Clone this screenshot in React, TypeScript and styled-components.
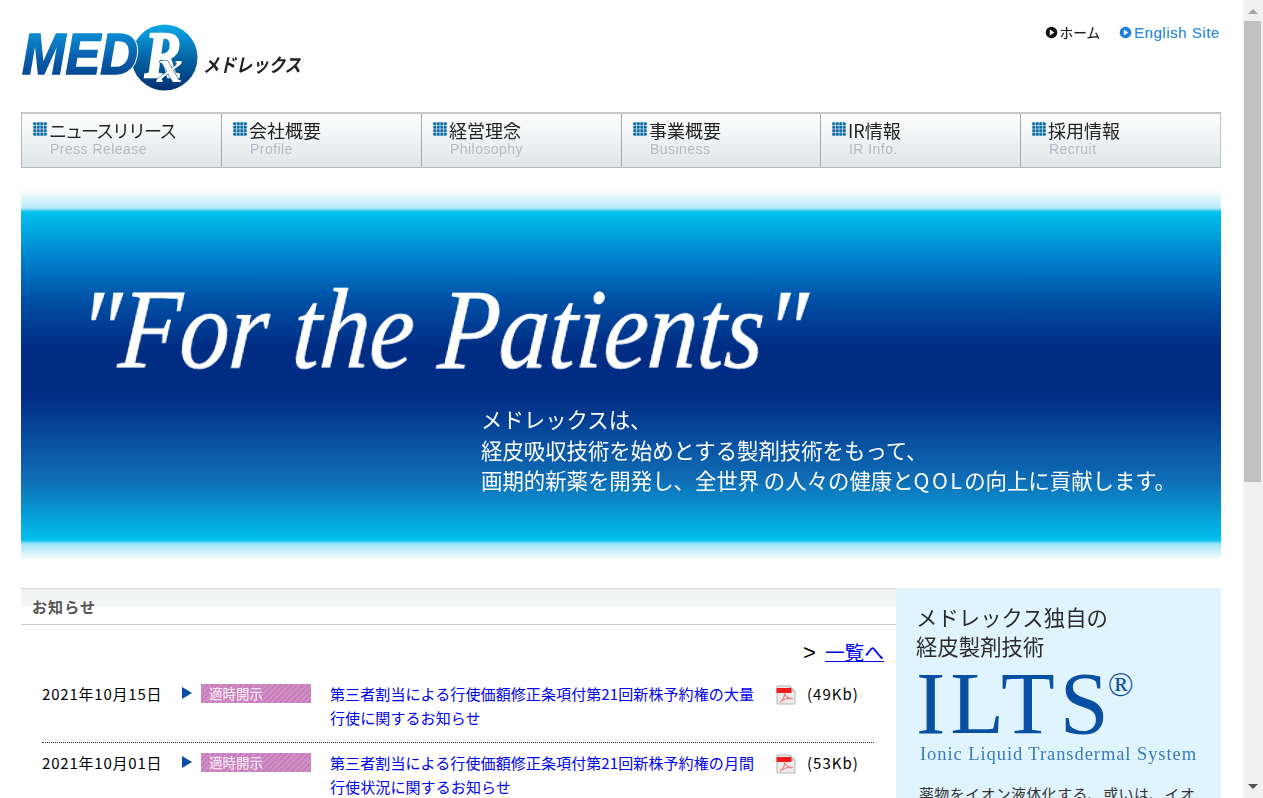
import React from "react";
import styled, { createGlobalStyle } from "styled-components";

const JP = `"Noto Sans CJK JP", "Noto Sans", sans-serif`;

const Global = createGlobalStyle`
  html { background: #fff; }
  body { margin: 0; font-family: ${JP}; color: #000; background: #fff; }
  a { color: #0000ee; }
`;

const Page = styled.div`
  width: 1200px;
  margin-left: 21px;
  min-height: 1308px;
`;

const ScrollTrack = styled.div`
  position: fixed;
  top: 0;
  right: 0;
  bottom: 0;
  width: 20px;
  background: #f1f1f1;
  display: flex;
  flex-direction: column;
`;

const ScrollButton = styled.div<{ $down?: boolean }>`
  height: 21px;
  flex: none;
  display: flex;
  justify-content: center;
  align-items: ${(p) => (p.$down ? "flex-start" : "flex-end")};
  padding: ${(p) => (p.$down ? "7px 1px 0 0" : "0 1px 7px 0")};
  box-sizing: border-box;
  &::before {
    content: "";
    width: 0;
    height: 0;
    border-left: 5px solid transparent;
    border-right: 5px solid transparent;
    ${(p) => (p.$down ? "border-top: 5px solid #505050;" : "border-bottom: 5px solid #a3a3a3;")}
  }
`;

const ScrollThumb = styled.div`
  height: 461px;
  margin: 0 2px 0 1px;
  background: #c1c1c1;
`;

const ScrollGap = styled.div`
  flex: 1;
`;

const Header = styled.header`
  height: 112px;
  display: flex;
  justify-content: space-between;
  align-items: flex-start;
`;

const LogoSvg = styled.svg`
  display: block;
  margin-top: 20px;
  filter: blur(0.35px);
`;

const MedText = styled.text`
  filter: drop-shadow(1.5px 0 0 #fff);
`;

const TopLinks = styled.nav`
  display: flex;
  gap: 19px;
  margin-top: 23px;
  margin-right: 1px;
  filter: blur(0.25px);
`;

const TopLink = styled.span<{ $color: string; $size: number; $spacing: number }>`
  display: flex;
  align-items: center;
  gap: 2px;
  height: 18px;
  color: ${(p) => p.$color};
  font-size: ${(p) => p.$size}px;
  letter-spacing: ${(p) => p.$spacing}px;
  font-family: "Liberation Sans", ${JP};
  -webkit-text-stroke: 0.2px ${(p) => p.$color};
  white-space: nowrap;
`;

const NavBar = styled.nav`
  display: grid;
  grid-template-columns: 199px 200px 200px 199px 200px 200px;
  height: 56px;
  box-sizing: border-box;
  border: 1px solid #b4b8b8;
  border-top: 2px solid #c6c9c9;
  border-right-color: #c0c4c4;
`;

const NavCell = styled.div`
  box-sizing: border-box;
  padding: 4px 0 0 11px;
  background: linear-gradient(#fefefe 0%, #f3f5f6 35%, #dfe6e8 100%);
  border-left: 1px solid #a4a9a9;
  &:first-child { border-left: 0; }
`;

const NavTitle = styled.div<{ $tight: boolean }>`
  display: flex;
  align-items: center;
  gap: 1px;
  height: 23px;
  font-size: 18px;
  line-height: 22px;
  letter-spacing: ${(p) => (p.$tight ? "-2px" : "0")};
  color: #222;
  white-space: nowrap;
  filter: blur(0.3px);
`;

const NavSub = styled.div`
  margin: 0 0 0 17px;
  height: 18px;
  font: 14px/17px "Liberation Sans", sans-serif;
  letter-spacing: 0.45px;
  color: #b3bcc5;
  filter: blur(0.25px);
`;

const Banner = styled.section`
  margin-top: 22px;
  height: 370px;
  box-sizing: border-box;
  padding-top: 82px;
  overflow: hidden;
  color: #fff;
  background: linear-gradient(
    #ffffff 0,
    #b8eafa 18px,
    #00c0ee 22px,
    #0080cc 70px,
    #0050a5 110px,
    #002c84 158px,
    #002c84 205px,
    #0f6db6 290px,
    #00c0ee 350px,
    #9fe4f8 354px,
    #ffffff 370px
  );
`;

const Slogan = styled.h1`
  margin: 0 0 0 53px;
  width: 840px;
  font: italic 400 114px/115px "Liberation Serif", serif;
  -webkit-text-stroke: 0.7px #fff;
  white-space: nowrap;
  transform: scaleX(0.87) skewX(-5deg);
  transform-origin: left bottom;
  filter: blur(0.3px);
`;

const Mission = styled.p`
  margin: 17px 0 0 460px;
  font-size: 21.4px;
  line-height: 30.5px;
  white-space: pre-line;
  font-weight: 400;
  filter: blur(0.3px);
`;

const WideLatin = styled.span`
  letter-spacing: 2.4px;
`;

const Columns = styled.div`
  display: flex;
  margin-top: 28px;
  align-items: flex-start;
`;

const MainCol = styled.main`
  width: 875px;
`;

const SectionHead = styled.h2`
  margin: 0;
  height: 37px;
  box-sizing: border-box;
  padding-left: 11px;
  border-top: 1px solid #d4d7d7;
  border-bottom: 1px solid #c3c9da;
  background: linear-gradient(#f0f1f2, #f6f7f7 17px, #ffffff 18px);
  font-size: 15px;
  line-height: 35px;
  font-weight: 700;
  color: #555;
  letter-spacing: 1.1px;
`;

const ListLink = styled.div`
  margin-top: 14px;
  padding-right: 12px;
  text-align: right;
  font-size: 19.7px;
  line-height: 26px;
`;

const Gt = styled.span`
  font: 22px/26px "Liberation Sans", sans-serif;
`;

const ListAnchor = styled.a`
  margin-left: 9px;
`;

const News = styled.ul`
  list-style: none;
  margin: 16px 0 0 21px;
  padding: 0;
  width: 832px;
`;

const NewsRow = styled.li`
  display: flex;
  align-items: flex-start;
  padding-bottom: 12px;
  font-size: 15px;
  line-height: 24px;
  & + & {
    padding-top: 8px;
    border-top: 1px dotted #333;
  }
`;

const DateText = styled.span`
  width: 140px;
  flex: none;
  letter-spacing: 0.8px;
  white-space: nowrap;
`;

const Arrow = styled.span`
  flex: none;
  width: 0;
  height: 0;
  margin-top: 5px;
  border-left: 10px solid #0b4ea5;
  border-top: 6px solid transparent;
  border-bottom: 6px solid transparent;
`;

const Tag = styled.span`
  flex: none;
  width: 110px;
  height: 19px;
  margin: 2px 0 0 9px;
  padding-left: 8px;
  box-sizing: border-box;
  background: repeating-linear-gradient(135deg, #c67db9 0 2px, #d08fc5 2px 4px);
  color: #f6e6f3;
  font-size: 13.5px;
  line-height: 19px;
  font-weight: 500;
  filter: blur(0.3px);
`;

const Title = styled.a`
  flex: none;
  width: 430px;
  margin-left: 19px;
  letter-spacing: 0.1px;
  text-decoration: none;
`;

const PdfSvg = styled.svg`
  flex: none;
  display: block;
  margin: 3px 0 0 16px;
`;

const Size = styled.span`
  margin-left: 11px;
  letter-spacing: 1px;
  white-space: nowrap;
`;

const Side = styled.aside`
  width: 325px;
  height: 720px;
  box-sizing: border-box;
  padding: 14px 24px 0 20px;
  background: #e0f4fe;
  overflow: hidden;
`;

const SideTitle = styled.h3`
  margin: 0;
  font-size: 21.3px;
  letter-spacing: 0.1px;
  line-height: 29px;
  font-weight: 400;
  color: #2b2b2b;
  white-space: pre-line;
  filter: blur(0.2px);
`;

const Ilts = styled.div`
  margin-top: 4px;
  height: 78px;
  display: flex;
  font: 400 88px/80px "Liberation Serif", serif;
  letter-spacing: 5px;
  color: #0a50a2;
`;

const Reg = styled.span`
  font-size: 34px;
  line-height: 42px;
  letter-spacing: 0;
  margin-left: -6px;
`;

const IltsSub = styled.div`
  margin: 0 0 0 4px;
  font: 400 18.5px/24px "Liberation Serif", serif;
  letter-spacing: 0.93px;
  color: #3a7cba;
  white-space: nowrap;
  filter: blur(0.2px);
`;

const SideBody = styled.p`
  margin: 15px 0 0 3px;
  font-size: 15px;
  line-height: 26px;
  letter-spacing: 0.35px;
  color: #333;
`;

const GridIcon = () => (
  <svg width="15" height="15" viewBox="0 0 15 15" aria-hidden="true">
    {[0, 1, 2, 3].flatMap((r) =>
      [0, 1, 2, 3].map((c) => (
        <rect key={`${r}${c}`} x={0.3 + c * 3.5} y={0.3 + r * 3.5} width="2.9" height="2.9" fill="#0b6ba6" />
      ))
    )}
  </svg>
);

const PlayDot = ({ color }: { color: string }) => (
  <svg width="13" height="13" viewBox="0 0 13 13" aria-hidden="true">
    <circle cx="6.5" cy="6.5" r="5.8" fill={color} />
    <path d="M4.8 3.6 L9.3 6.5 L4.8 9.4 Z" fill="#fff" />
  </svg>
);

const PdfIcon = () => (
  <PdfSvg width="20" height="20" viewBox="0 0 20 20" aria-hidden="true">
    <path d="M1 1h13l5 5v13H1z" fill="#ececec" stroke="#b5b5b5" />
    <path d="M14 1v5h5" fill="#d8d8d8" stroke="#b5b5b5" />
    <rect x="0.5" y="3" width="15" height="5" fill="#ee1c1c" />
    <path d="M4 17c3-1 5-6 4.5-9.5C9 11 12 14 17 13.5c-5-.5-10 1-13 3.5z" fill="none" stroke="#f08080" strokeWidth="1.2" />
  </PdfSvg>
);

const Logo = () => (
  <LogoSvg width="285" height="75" viewBox="0 0 285 75" role="img" aria-label="MEDRx メドレックス">
    <defs>
      <linearGradient id="medFill" x1="0" y1="0" x2="0" y2="1">
        <stop offset="0" stopColor="#0c9fe2" />
        <stop offset="0.6" stopColor="#0a5aa8" />
        <stop offset="1" stopColor="#003a80" />
      </linearGradient>
      <linearGradient id="rxFill" x1="0" y1="0" x2="0" y2="1">
        <stop offset="0" stopColor="#0ca8ea" />
        <stop offset="0.55" stopColor="#05609f" />
        <stop offset="1" stopColor="#00306f" />
      </linearGradient>
    </defs>
    <circle cx="143.5" cy="37.5" r="33" fill="url(#rxFill)" />
    <MedText x="1" y="54" fontFamily="Liberation Sans" fontWeight="700" fontStyle="italic" fontSize="57" textLength="116" lengthAdjust="spacingAndGlyphs" fill="url(#medFill)" stroke="url(#medFill)" strokeWidth="1.5">MED</MedText>
    <text x="124" y="57" fontFamily="Liberation Serif" fontWeight="700" fontStyle="italic" fontSize="66" textLength="36" lengthAdjust="spacingAndGlyphs" fill="#fff" stroke="#fff" strokeWidth="2.5">R</text>
    <text x="136" y="62" fontFamily="Liberation Serif" fontWeight="700" fontStyle="italic" fontSize="46" textLength="26" lengthAdjust="spacingAndGlyphs" fill="#fff" stroke="#0a4f92" strokeWidth="1" paintOrder="stroke">x</text>
    <text x="182" y="52" fontFamily="Noto Sans CJK JP" fontWeight="700" fontSize="19" fontStyle="italic" textLength="98" lengthAdjust="spacingAndGlyphs" fill="#222">メドレックス</text>
  </LogoSvg>
);

const navItems = [
  ["ニュースリリース", "Press Release"],
  ["会社概要", "Profile"],
  ["経営理念", "Philosophy"],
  ["事業概要", "Business"],
  ["IR情報", "IR Info."],
  ["採用情報", "Recruit"],
];

const newsItems = [
  { date: "2021年10月15日", title: "第三者割当による行使価額修正条項付第21回新株予約権の大量行使に関するお知らせ", size: "(49Kb)" },
  { date: "2021年10月01日", title: "第三者割当による行使価額修正条項付第21回新株予約権の月間行使状況に関するお知らせ", size: "(53Kb)" },
];

export default function App() {
  return (
    <Page>
      <Global />
      <Header>
        <Logo />
        <TopLinks>
          <TopLink $color="#222" $size={13.7} $spacing={0}><PlayDot color="#111" />ホーム</TopLink>
          <TopLink $color="#2b8ae0" $size={15} $spacing={0.55}><PlayDot color="#1a80dc" />English Site</TopLink>
        </TopLinks>
      </Header>
      <NavBar>
        {navItems.map(([jp, en], i) => (
          <NavCell key={en}>
            <NavTitle $tight={i === 0}><GridIcon />{jp}</NavTitle>
            <NavSub>{en}</NavSub>
          </NavCell>
        ))}
      </NavBar>
      <Banner>
        <Slogan>"For the Patients"</Slogan>
        <Mission>
          {"メドレックスは、\n経皮吸収技術を始めとする製剤技術をもって、\n画期的新薬を開発し、全世界 の人々の健康と"}
          <WideLatin>QOL</WideLatin>
          {"の向上に貢献します。"}
        </Mission>
      </Banner>
      <Columns>
        <MainCol>
          <SectionHead>お知らせ</SectionHead>
          <ListLink><Gt>&gt;</Gt><ListAnchor href="#">一覧へ</ListAnchor></ListLink>
          <News>
            {newsItems.map((n) => (
              <NewsRow key={n.date}>
                <DateText>{n.date}</DateText>
                <Arrow />
                <Tag>適時開示</Tag>
                <Title href="#">{n.title}</Title>
                <PdfIcon />
                <Size>{n.size}</Size>
              </NewsRow>
            ))}
          </News>
        </MainCol>
        <Side>
          <SideTitle>{"メドレックス独自の\n経皮製剤技術"}</SideTitle>
          <Ilts>ILTS<Reg>®</Reg></Ilts>
          <IltsSub>Ionic Liquid Transdermal System</IltsSub>
          <SideBody>薬物をイオン液体化する、或いは、イオン液体に溶解することにより、薬物の皮膚透過性を高める技術です。</SideBody>
        </Side>
      </Columns>
      <ScrollTrack aria-hidden="true">
        <ScrollButton />
        <ScrollThumb />
        <ScrollGap />
        <ScrollButton $down />
      </ScrollTrack>
    </Page>
  );
}
